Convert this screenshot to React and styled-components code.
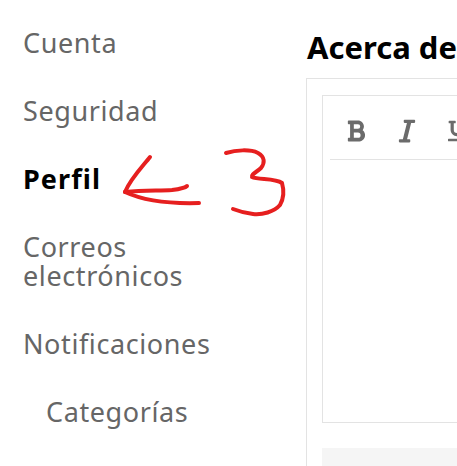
import React from 'react'
import styled, { createGlobalStyle } from 'styled-components'
import { FaBold, FaItalic, FaUnderline } from 'react-icons/fa'

const GlobalStyle = createGlobalStyle`
  html, body {
    margin: 0;
    padding: 0;
    background: #fff;
    overflow: hidden;
  }
`

const Page = styled.div`
  position: relative;
  width: 457px;
  height: 466px;
  overflow: hidden;
  display: flex;
  font-family: "Noto Sans", "Open Sans", sans-serif;
`

const Sidebar = styled.nav`
  width: 306px;
  flex-shrink: 0;
  box-sizing: border-box;
  padding: 28px 0 0 23px;
  display: flex;
  flex-direction: column;
  gap: 39px;
`

const NavItem = styled.a`
  display: block;
  width: 200px;
  font-size: 27px;
  line-height: 29px;
  letter-spacing: ${({ $active }) => ($active ? '1.1px' : '0.6px')};
  color: ${({ $active }) => ($active ? '#000' : '#666')};
  font-weight: ${({ $active }) => ($active ? 700 : 400)};
  margin-left: ${({ $sub }) => ($sub ? '23px' : '0')};
`

const Main = styled.main`
  flex: 1;
  min-width: 0;
  display: flex;
  flex-direction: column;
`

const Title = styled.h2`
  margin: 26px 0 0 1px;
  height: 52px;
  font-size: 31px;
  line-height: 42px;
  font-weight: 700;
  color: #000;
  white-space: nowrap;
`

const Panel = styled.section`
  flex: 1;
  width: 300px;
  box-sizing: border-box;
  border: 1px solid #e3e3e3;
  border-bottom: none;
  padding: 16px 0 0 15px;
`

const Editor = styled.div`
  width: 280px;
  height: 328px;
  box-sizing: border-box;
  border: 1px solid #e3e3e3;
  padding: 0 7px;
`

const Toolbar = styled.div`
  height: 64px;
  box-sizing: border-box;
  border-bottom: 1px solid #e3e3e3;
  padding: 22px 0 0 17px;
  display: flex;
  gap: 32.5px;
  color: #6b6b6b;
  font-size: 26px;
`

const ToolIcon = styled.span`
  display: flex;
  width: 18px;
  height: 25px;
  align-items: center;
  justify-content: center;
  flex-shrink: 0;
`

const FooterBar = styled.div`
  width: 280px;
  height: 18px;
  margin-top: 25px;
  background: #f5f5f5;
`

const Scribble = styled.svg`
  position: absolute;
  left: 0;
  top: 0;
  pointer-events: none;
`

const App = () => {
  return (
    <>
      <GlobalStyle />
      <Page>
        <Sidebar>
          <NavItem>Cuenta</NavItem>
          <NavItem>Seguridad</NavItem>
          <NavItem $active>Perfil</NavItem>
          <NavItem>Correos electrónicos</NavItem>
          <NavItem>Notificaciones</NavItem>
          <NavItem $sub>Categorías</NavItem>
        </Sidebar>
        <Main>
          <Title>Acerca de</Title>
          <Panel>
            <Editor>
              <Toolbar>
                <ToolIcon><FaBold /></ToolIcon>
                <ToolIcon><FaItalic /></ToolIcon>
                <ToolIcon><FaUnderline /></ToolIcon>
              </Toolbar>
            </Editor>
            <FooterBar />
          </Panel>
        </Main>
        <Scribble width="457" height="466" viewBox="0 0 457 466" fill="none" stroke="#e61f1f" strokeWidth="4" strokeLinecap="round" strokeLinejoin="round">
          <path d="M150 157 C143 166 131 178 125 192" />
          <path d="M125 192 C145 190 160 191 172 190 C180 189 185 188 187 186" />
          <path d="M125 192 C140 199 165 204 199 203" />
          <path d="M226 153 C236 150 250 149 258 153 C265 157 265 163 261 168 C257 172 251 174 252 177 C258 180 275 178 282 183 C284 190 284 198 280 205 C274 212 262 215 253 214 C245 213 238 211 233 209" />
        </Scribble>
      </Page>
    </>
  )
}

export default App
